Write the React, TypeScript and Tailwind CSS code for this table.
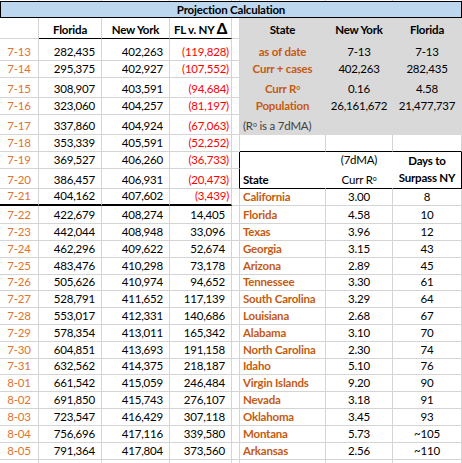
import React from 'react';
import { twMerge } from 'tailwind-merge';

const LEFT_ROWS: [string, string, string, string][] = [
  ['7-13', '282,435', '402,263', '(119,828)'],
  ['7-14', '295,375', '402,927', '(107,552)'],
  ['7-15', '308,907', '403,591', '(94,684)'],
  ['7-16', '323,060', '404,257', '(81,197)'],
  ['7-17', '337,860', '404,924', '(67,063)'],
  ['7-18', '353,339', '405,591', '(52,252)'],
  ['7-19', '369,527', '406,260', '(36,733)'],
  ['7-20', '386,457', '406,931', '(20,473)'],
  ['7-21', '404,162', '407,602', '(3,439)'],
  ['7-22', '422,679', '408,274', '14,405'],
  ['7-23', '442,044', '408,948', '33,096'],
  ['7-24', '462,296', '409,622', '52,674'],
  ['7-25', '483,476', '410,298', '73,178'],
  ['7-26', '505,626', '410,974', '94,652'],
  ['7-27', '528,791', '411,652', '117,139'],
  ['7-28', '553,017', '412,331', '140,686'],
  ['7-29', '578,354', '413,011', '165,342'],
  ['7-30', '604,851', '413,693', '191,158'],
  ['7-31', '632,562', '414,375', '218,187'],
  ['8-01', '661,542', '415,059', '246,484'],
  ['8-02', '691,850', '415,743', '276,107'],
  ['8-03', '723,547', '416,429', '307,118'],
  ['8-04', '756,696', '417,116', '339,580'],
  ['8-05', '791,364', '417,804', '373,560'],
];

const STATES: [string, string, string][] = [
  ['California', '3.00', '8'],
  ['Florida', '4.58', '10'],
  ['Texas', '3.96', '12'],
  ['Georgia', '3.15', '43'],
  ['Arizona', '2.89', '45'],
  ['Tennessee', '3.30', '61'],
  ['South Carolina', '3.29', '64'],
  ['Louisiana', '2.68', '67'],
  ['Alabama', '3.10', '70'],
  ['North Carolina', '2.30', '74'],
  ['Idaho', '5.10', '76'],
  ['Virgin Islands', '9.20', '90'],
  ['Nevada', '3.18', '91'],
  ['Oklahoma', '3.45', '93'],
  ['Montana', '5.73', '~105'],
  ['Arkansas', '2.56', '~110'],
];

const GRAY = 'bg-[#d9d9d9] border-[#d9d9d9]';

const Cell: React.FC<{ className?: string; children?: React.ReactNode }> = ({ className, children }) => (
  <div
    className={twMerge(
      'flex items-end overflow-hidden whitespace-nowrap border-r border-b border-[#d4d4d4] pb-[1px] leading-[14px]',
      className
    )}
  >
    {children}
  </div>
);

// "R" with the small raised o, kept inline inside a span so the flex cell doesn't split it
const CurrR0 = ({ prefix = 'Curr ' }: { prefix?: string }) => (
  <span>
    {prefix}R<sup className="text-[7px]">o</sup>
  </span>
);

const rightCells = (i: number) => {
  if (i < 4) {
    const rows: [React.ReactNode, string, string][] = [
      ['as of date', '7-13', '7-13'],
      ['Curr + cases', '402,263', '282,435'],
      [<CurrR0 />, '0.16', '4.58'],
      ['Population', '26,161,672', '21,477,737'],
    ];
    const [label, ny, fl] = rows[i];
    return (
      <>
        <Cell className={`${GRAY} justify-center font-bold text-[#c55a11]`}>{label}</Cell>
        <Cell className={`${GRAY} justify-center`}>{ny}</Cell>
        <Cell className={`${GRAY} justify-center`}>{fl}</Cell>
      </>
    );
  }
  if (i === 4) {
    return (
      <Cell className={`${GRAY} col-span-3 px-[3px] text-[#404040]`}>
        <span>
          (R<sup className="text-[7px]">o</sup> is a 7dMA)
        </span>
      </Cell>
    );
  }
  if (i === 5) {
    return (
      <>
        <Cell className="border-b-black" />
        <Cell className="border-b-black" />
        <Cell className="border-b-black" />
      </>
    );
  }
  if (i === 6) {
    return (
      <>
        <Cell className="border-white" />
        <Cell className="justify-center border-white">(7dMA)</Cell>
        <Cell className="row-span-2 flex-col items-center justify-center whitespace-normal border-r-black border-b-black pb-[2px] text-center font-bold leading-[17px]">
          <span>Days to</span>
          <span>Surpass NY</span>
        </Cell>
      </>
    );
  }
  if (i === 7) {
    return (
      <>
        <Cell className="border-r-white border-b-black px-[3px] font-bold">State</Cell>
        <Cell className="justify-center border-r-white border-b-black">
          <CurrR0 />
        </Cell>
      </>
    );
  }
  const [name, r0, days] = STATES[i - 8];
  return (
    <>
      <Cell className="px-[3px] font-bold text-[#c55a11]">{name}</Cell>
      <Cell className="justify-center">{r0}</Cell>
      <Cell className="justify-center">{days}</Cell>
    </>
  );
};

export default function App() {
  return (
    <div className="h-[463px] w-[462px] overflow-hidden bg-white font-[Lato,sans-serif] text-[11.5px] tracking-[-0.2px] text-black">
      <div className="grid grid-cols-[39px_63px_68px_62px_8px_86px_67px_69px] grid-rows-[1px_17px_21px_22px_17px_20px_17px_20px_17px_17px_20px_17px_18px_17px_17px_17px_16px_17px_17px_17px_17px_16px_17px_17px_17px_17px_17px_3px]">
        {/* spacer row above the title */}
        {Array.from({ length: 8 }).map((_, k) => (
          <Cell key={`s${k}`} className="border-b-0 pb-0" />
        ))}

        <Cell className="col-span-8 items-center justify-center border border-black bg-[#bdd7ee] pb-0 font-bold">
          Projection Calculation
        </Cell>

        {/* header row */}
        <Cell />
        <Cell className="justify-center border-b-black font-bold">Florida</Cell>
        <Cell className="justify-center border-b-black font-bold">New York</Cell>
        <Cell className="justify-center border-b-black font-bold">
          <span>
            FL v. NY <span className="text-[15px] leading-[14px] font-black">Δ</span>
          </span>
        </Cell>
        <Cell />
        <Cell className={`${GRAY} justify-center font-bold`}>State</Cell>
        <Cell className={`${GRAY} justify-center font-bold`}>New York</Cell>
        <Cell className={`${GRAY} justify-center font-bold`}>Florida</Cell>

        {LEFT_ROWS.map(([date, fl, ny, diff], i) => {
          const neg = diff.startsWith('(');
          const thick = i === 8 ? 'border-b-2 border-b-black' : '';
          return (
            <React.Fragment key={date}>
              <Cell className={`justify-center text-[#e07330] ${thick}`}>{date}</Cell>
              <Cell className={`justify-end pr-[6px] ${thick}`}>{fl}</Cell>
              <Cell className={`justify-end pr-[6px] ${thick}`}>{ny}</Cell>
              <Cell className={`justify-end ${neg ? 'pr-[2px] text-[#ff0000]' : 'pr-[6px]'} ${thick}`}>{diff}</Cell>
              <Cell className={i === 6 || i === 7 ? 'border-r-black' : ''} />
              {rightCells(i)}
            </React.Fragment>
          );
        })}

        {Array.from({ length: 8 }).map((_, k) => (
          <Cell key={`t${k}`} className="border-b-0 pb-0" />
        ))}
      </div>
    </div>
  );
}
